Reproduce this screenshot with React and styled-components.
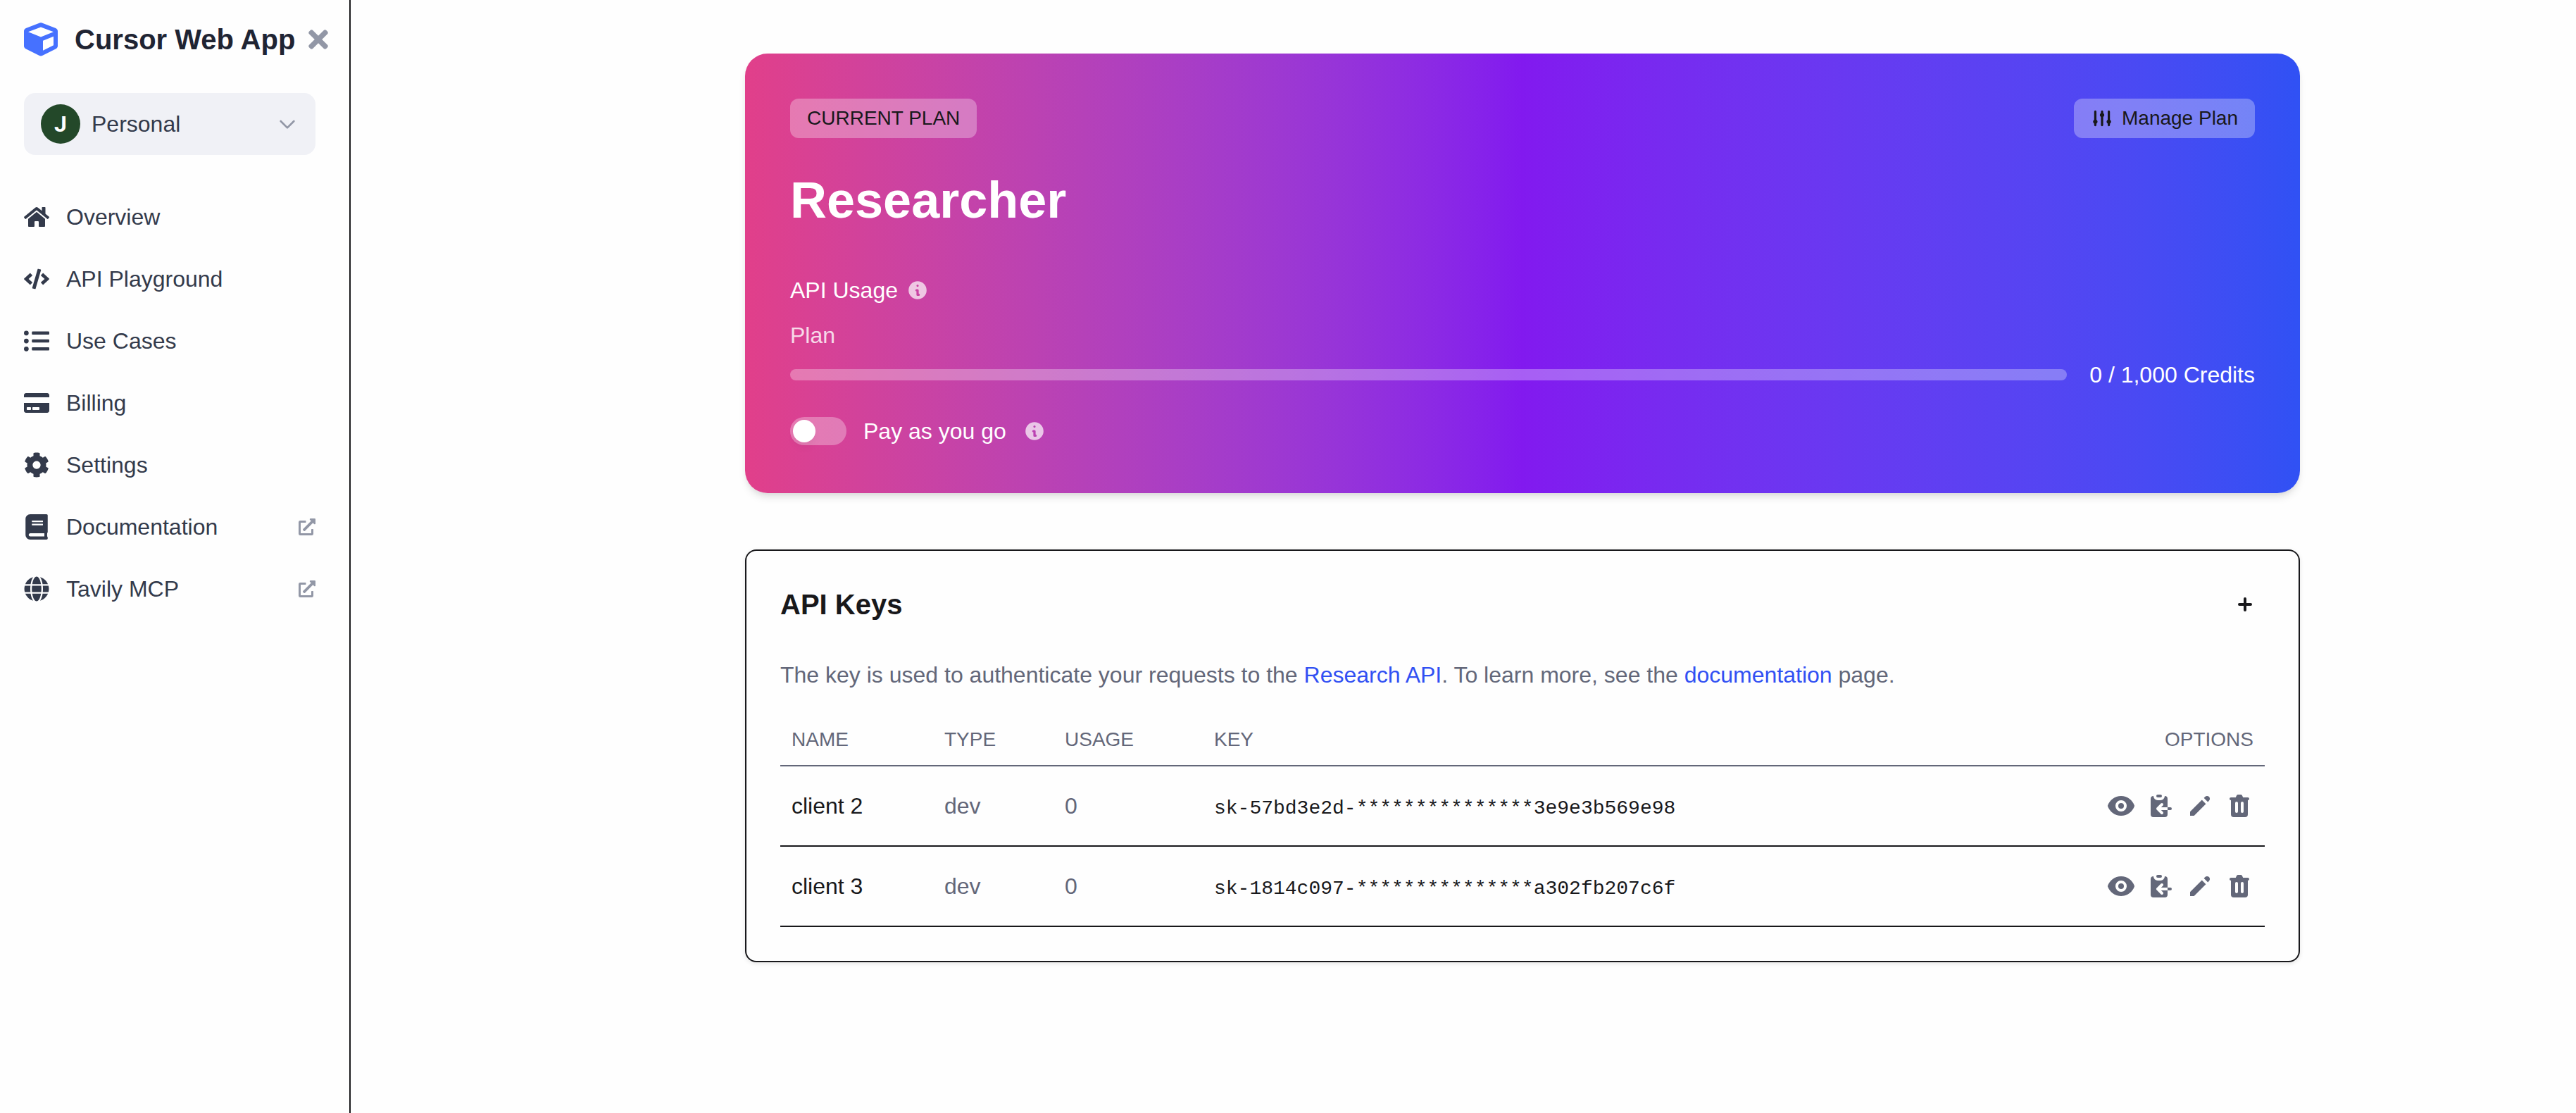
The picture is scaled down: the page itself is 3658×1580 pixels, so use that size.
import React, { useState } from "react";
import styled, { createGlobalStyle } from "styled-components";
import {
  FaCube,
  FaTimes,
  FaHome,
  FaCode,
  FaListUl,
  FaCreditCard,
  FaCog,
  FaBook,
  FaGlobe,
  FaExternalLinkAlt,
} from "react-icons/fa";
import {
  HiOutlineChevronDown,
  HiInformationCircle,
  HiAdjustments,
  HiPlusSm,
  HiEye,
  HiClipboardCopy,
  HiPencil,
  HiTrash,
} from "react-icons/hi";

const color = {
  ink: "#18181b",
  title: "#1f2433",
  nav: "#333a4b",
  muted: "#636779",
  faint: "#9297a6",
  panel: "#f0f1f6",
  link: "#3150f3",
  brand: "#4671ff",
};

const sans = `"Liberation Sans", Arial, Helvetica, sans-serif`;
const mono = `"Liberation Mono", "Courier New", monospace`;

const GlobalStyle = createGlobalStyle`
  *, *::before, *::after { box-sizing: border-box; }
  body {
    margin: 0;
    background: #fefefe;
    color: ${color.ink};
    font-family: ${sans};
    font-size: 32px;
    line-height: 48px;
  }
  button, input { font: inherit; color: inherit; }
  h1, h2, p, ul { margin: 0; padding: 0; }
  a { color: inherit; text-decoration: none; }
  svg { display: block; flex: none; }
`;

const Shell = styled.div`
  display: flex;
  align-items: stretch;
  min-height: 100vh;
`;

/* Sidebar */

const Sidebar = styled.aside`
  flex: none;
  width: 498px;
  padding: 28px 48px 28px 34px;
  border-right: 2px solid ${color.ink};
`;

const Brand = styled.div`
  display: flex;
  align-items: center;
  height: 56px;
  margin-right: -32px;
  color: ${color.brand};
`;

const BrandName = styled.span`
  margin-left: 24px;
  color: ${color.title};
  font-size: 40px;
  font-weight: 700;
  line-height: 56px;
  white-space: nowrap;
`;

const IconButton = styled.button`
  display: flex;
  flex: none;
  align-items: center;
  justify-content: center;
  padding: ${(p) => p.$pad || "0"};
  border: 0;
  background: none;
  color: ${(p) => p.$color || color.muted};
  cursor: pointer;
`;

const CloseButton = styled(IconButton)`
  margin-left: auto;
  margin-right: 8px;
`;

const AccountButton = styled.button`
  display: flex;
  align-items: center;
  gap: 16px;
  width: 100%;
  margin: 48px 0 44px;
  padding: 16px 24px;
  border: 0;
  border-radius: 16px;
  background: ${color.panel};
  color: ${color.nav};
  text-align: left;
  cursor: pointer;
  svg { color: ${color.faint}; }
`;

const Avatar = styled.span`
  display: flex;
  align-items: center;
  justify-content: center;
  width: 56px;
  height: 56px;
  border-radius: 50%;
  background: #234829;
  color: #fff;
  font-family: Roboto, ${sans};
  font-weight: 700;
`;

const Grow = styled.span`
  flex: 1;
`;

const NavList = styled.ul`
  list-style: none;
`;

const NavLink = styled.a`
  display: flex;
  align-items: center;
  gap: 24px;
  padding: 20px 0;
  color: ${color.nav};
`;

const External = styled.span`
  color: ${color.faint};
`;

/* Main column */

const Main = styled.main`
  flex: 1;
  min-width: 0;
  padding: 76px 0 76px 168px;
`;

const Column = styled.div`
  display: flex;
  flex-direction: column;
  gap: 80px;
  max-width: 2208px;
  margin: 0 auto;
`;

const PlanCard = styled.section`
  padding: 64px;
  border-radius: 32px;
  background: linear-gradient(to right in oklab, #e13f8a 0%, #8219ef 50%, #3051f4 100%);
  box-shadow: 0 8px 12px -2px rgba(0, 0, 0, 0.1), 0 4px 8px -4px rgba(0, 0, 0, 0.1);
  color: #fff;
`;

const Spread = styled.div`
  display: flex;
  align-items: center;
  justify-content: space-between;
`;

const Tag = styled.span`
  padding: 8px 24px;
  border-radius: 12px;
  background: rgba(255, 255, 255, 0.3);
  color: ${color.ink};
  font-size: 28px;
  line-height: 40px;
`;

const ManageButton = styled(Tag).attrs({ as: "button", type: "button" })`
  display: flex;
  align-items: center;
  gap: 12px;
  border: 0;
  cursor: pointer;
`;

const PlanName = styled.h1`
  margin-top: 48px;
  font-size: 72px;
  line-height: 80px;
`;

const Line = styled.div`
  display: flex;
  align-items: center;
  gap: ${(p) => p.$gap}px;
  margin-top: ${(p) => p.$top}px;
`;

const Info = styled(HiInformationCircle)`
  width: 32px;
  height: 32px;
  opacity: 0.7;
`;

const PlanLabel = styled.label`
  display: block;
  margin-top: 16px;
  opacity: 0.8;
`;

const Meter = styled.progress`
  flex: 1;
  height: 16px;
  appearance: none;
  border: 0;
  border-radius: 8px;
  overflow: hidden;
  background: rgba(255, 255, 255, 0.3);
  &::-webkit-progress-bar { background: transparent; }
  &::-webkit-progress-value { background: #fff; }
`;

const Switch = styled.input`
  display: flex;
  align-items: center;
  appearance: none;
  width: 80px;
  height: 40px;
  margin: 0;
  padding: 0 4px;
  border-radius: 20px;
  background: rgba(255, 255, 255, 0.3);
  cursor: pointer;
  &::before {
    content: "";
    width: 32px;
    height: 32px;
    border-radius: 50%;
    background: #fff;
    box-shadow: 0 8px 12px rgba(0, 0, 0, 0.04);
  }
  &:checked { justify-content: flex-end; }
`;

/* API keys */

const KeysCard = styled.section`
  padding: 48px;
  border: 2px solid ${color.ink};
  border-radius: 16px;
  box-shadow: 0 2px 6px rgba(0, 0, 0, 0.1);
`;

const KeysTitle = styled.h2`
  font-size: 40px;
  line-height: 56px;
`;

const Note = styled.p`
  margin: 48px 0 32px;
  color: ${color.muted};
  a { color: ${color.link}; }
`;

const Table = styled.table`
  width: 100%;
  table-layout: fixed;
  border-collapse: separate;
  border-spacing: 0;
`;

const Th = styled.th`
  width: ${(p) => (p.$width ? `${p.$width}px` : "auto")};
  padding: 16px;
  border-bottom: 2px solid ${color.muted};
  color: ${color.muted};
  font-size: 28px;
  font-weight: 400;
  line-height: 40px;
  text-align: ${(p) => (p.$right ? "right" : "left")};
`;

const Td = styled.td`
  padding: 32px 16px;
  border-bottom: 2px solid ${color.ink};
  color: ${(p) => (p.$muted ? color.muted : color.ink)};
`;

const KeyText = styled.code`
  font-family: ${mono};
  font-size: 28px;
  line-height: 40px;
`;

const Actions = styled.div`
  display: flex;
  justify-content: flex-end;
  gap: 16px;
`;

const navItems = [
  { label: "Overview", icon: FaHome },
  { label: "API Playground", icon: FaCode },
  { label: "Use Cases", icon: FaListUl },
  { label: "Billing", icon: FaCreditCard },
  { label: "Settings", icon: FaCog },
  { label: "Documentation", icon: FaBook, external: true },
  { label: "Tavily MCP", icon: FaGlobe, external: true },
];

const keys = [
  { name: "client 2", type: "dev", usage: 0, head: "sk-57bd3e2d-", tail: "3e9e3b569e98" },
  { name: "client 3", type: "dev", usage: 0, head: "sk-1814c097-", tail: "a302fb207c6f" },
];

const actions = [
  { label: "Show key", icon: HiEye },
  { label: "Copy key", icon: HiClipboardCopy },
  { label: "Edit key", icon: HiPencil },
  { label: "Delete key", icon: HiTrash },
];

export default function App() {
  const [payg, setPayg] = useState(false);
  return (
    <>
      <GlobalStyle />
      <Shell>
        <Sidebar>
          <Brand>
            <FaCube size={48} />
            <BrandName>Cursor Web App</BrandName>
            <CloseButton type="button" aria-label="Close sidebar" $color={color.faint}>
              <FaTimes size={40} />
            </CloseButton>
          </Brand>
          <AccountButton type="button">
            <Avatar>J</Avatar>
            <Grow>Personal</Grow>
            <HiOutlineChevronDown size={32} />
          </AccountButton>
          <nav>
            <NavList>
              {navItems.map(({ label, icon: Icon, external }) => (
                <li key={label}>
                  <NavLink href="#">
                    <Icon size={36} />
                    <Grow>{label}</Grow>
                    {external && (
                      <External>
                        <FaExternalLinkAlt size={24} />
                      </External>
                    )}
                  </NavLink>
                </li>
              ))}
            </NavList>
          </nav>
        </Sidebar>
        <Main>
          <Column>
            <PlanCard>
              <Spread>
                <Tag>CURRENT PLAN</Tag>
                <ManageButton>
                  <HiAdjustments size={32} />
                  Manage Plan
                </ManageButton>
              </Spread>
              <PlanName>Researcher</PlanName>
              <Line $gap={12} $top={64}>
                API Usage
                <Info />
              </Line>
              <PlanLabel htmlFor="plan-usage">Plan</PlanLabel>
              <Line $gap={32} $top={8}>
                <Meter id="plan-usage" value={0} max={1000} />
                <span>0 / 1,000 Credits</span>
              </Line>
              <Line $gap={24} $top={32}>
                <Switch
                  id="payg"
                  type="checkbox"
                  role="switch"
                  checked={payg}
                  onChange={(e) => setPayg(e.target.checked)}
                />
                <label htmlFor="payg">Pay as you go</label>
                <Info />
              </Line>
            </PlanCard>
            <KeysCard>
              <Spread>
                <KeysTitle>API Keys</KeysTitle>
                <IconButton type="button" aria-label="Add key" $color={color.ink} $pad="8px">
                  <HiPlusSm size={40} />
                </IconButton>
              </Spread>
              <Note>
                The key is used to authenticate your requests to the <a href="#">Research API</a>. To
                learn more, see the <a href="#">documentation</a> page.
              </Note>
              <Table>
                <thead>
                  <tr>
                    <Th $width={217}>NAME</Th>
                    <Th $width={171}>TYPE</Th>
                    <Th $width={212}>USAGE</Th>
                    <Th>KEY</Th>
                    <Th $width={260} $right>OPTIONS</Th>
                  </tr>
                </thead>
                <tbody>
                  {keys.map((k) => (
                    <tr key={k.name}>
                      <Td>{k.name}</Td>
                      <Td $muted>{k.type}</Td>
                      <Td $muted>{k.usage}</Td>
                      <Td>
                        <KeyText>
                          {k.head + "*".repeat(15) + k.tail}
                        </KeyText>
                      </Td>
                      <Td>
                        <Actions>
                          {actions.map(({ label, icon: Icon }) => (
                            <IconButton key={label} type="button" aria-label={label}>
                              <Icon size={40} />
                            </IconButton>
                          ))}
                        </Actions>
                      </Td>
                    </tr>
                  ))}
                </tbody>
              </Table>
            </KeysCard>
          </Column>
        </Main>
      </Shell>
    </>
  );
}
